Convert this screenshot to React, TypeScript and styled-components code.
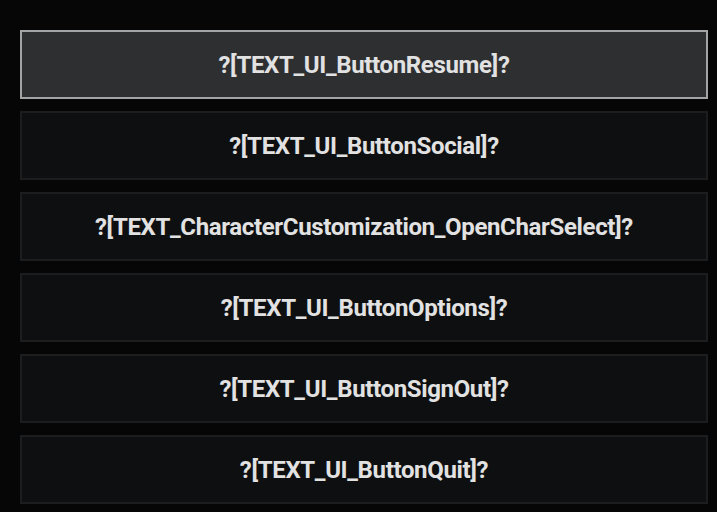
import React from "react";
import styled, { createGlobalStyle } from "styled-components";

const Global = createGlobalStyle`
  html, body { margin: 0; padding: 0; background: #060607; }
  body { width: 717px; height: 512px; overflow: hidden; }
`;

const Menu = styled.div`
  display: flex;
  flex-direction: column;
  gap: 12px;
  padding: 30px 9px 0 20px;
  box-sizing: border-box;
  width: 717px;
  height: 512px;
  background: #060607;
`;

const MenuButton = styled.div<{ $active?: boolean }>`
  box-sizing: border-box;
  height: 69px;
  display: flex;
  align-items: center;
  justify-content: center;
  background: ${(p) => (p.$active ? "#2e2f31" : "#0e0f10")};
  border: 2px solid ${(p) => (p.$active ? "#a3a4a5" : "#1c1d1f")};
  color: #e2e2e2;
  font-family: Roboto, "Liberation Sans", sans-serif;
  font-weight: 700;
  font-size: 24px;
  letter-spacing: -0.35px;
`;

const items = [
  "?[TEXT_UI_ButtonResume]?",
  "?[TEXT_UI_ButtonSocial]?",
  "?[TEXT_CharacterCustomization_OpenCharSelect]?",
  "?[TEXT_UI_ButtonOptions]?",
  "?[TEXT_UI_ButtonSignOut]?",
  "?[TEXT_UI_ButtonQuit]?",
];

export default function App() {
  return (
    <>
      <Global />
      <Menu>
        {items.map((t, i) => (
          <MenuButton key={t} $active={i === 0}>
            {t}
          </MenuButton>
        ))}
      </Menu>
    </>
  );
}
